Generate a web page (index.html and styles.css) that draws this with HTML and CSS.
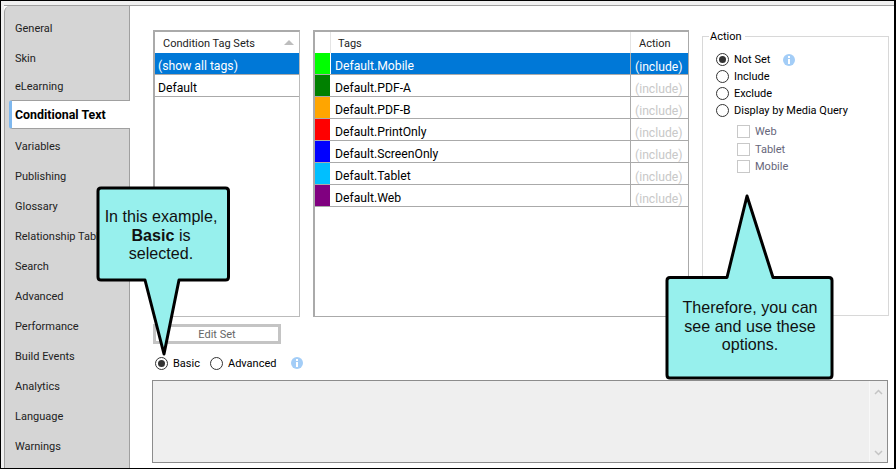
FILE: index.html
```html
<!DOCTYPE html>
<html lang="en">
<head>
    <meta charset="UTF-8">
    <title>Conditional Text</title>
    <link rel="stylesheet" href="styles.css">
</head>
<body>
    <div class="shot">
        <div class="window">
            <nav class="side">
                <a class="side-item">General</a>
                <a class="side-item">Skin</a>
                <a class="side-item short">eLearning</a>
                <a class="side-item active">Conditional Text</a>
                <a class="side-item">Variables</a>
                <a class="side-item">Publishing</a>
                <a class="side-item">Glossary</a>
                <a class="side-item">Relationship Table</a>
                <a class="side-item">Search</a>
                <a class="side-item">Advanced</a>
                <a class="side-item">Performance</a>
                <a class="side-item">Build Events</a>
                <a class="side-item">Analytics</a>
                <a class="side-item">Language</a>
                <a class="side-item">Warnings</a>
            </nav>

            <main class="main">
                <div class="panels">
                    <div class="col-left">
                        <div class="list">
                            <div class="list-head">Condition Tag Sets <span class="sort-up"></span></div>
                            <div class="list-row selected">(show all tags)</div>
                            <div class="list-row">Default</div>
                        </div>
                        <div class="edit-btn">Edit Set</div>
                    </div>

                    <div class="tags">
                        <div class="tag-head">
                            <div class="swatch-cell"></div>
                            <div class="tag-name">Tags</div>
                            <div class="tag-action">Action</div>
                        </div>
                        <div class="tag-row selected">
                            <div class="swatch" style="background: #00ff00"></div>
                            <div class="tag-name">Default.Mobile</div>
                            <div class="tag-action">(include)</div>
                        </div>
                        <div class="tag-row">
                            <div class="swatch" style="background: #008000"></div>
                            <div class="tag-name">Default.PDF-A</div>
                            <div class="tag-action">(include)</div>
                        </div>
                        <div class="tag-row">
                            <div class="swatch" style="background: #ffa500"></div>
                            <div class="tag-name">Default.PDF-B</div>
                            <div class="tag-action">(include)</div>
                        </div>
                        <div class="tag-row">
                            <div class="swatch" style="background: #ff0000"></div>
                            <div class="tag-name">Default.PrintOnly</div>
                            <div class="tag-action">(include)</div>
                        </div>
                        <div class="tag-row">
                            <div class="swatch" style="background: #0000ff"></div>
                            <div class="tag-name">Default.ScreenOnly</div>
                            <div class="tag-action">(include)</div>
                        </div>
                        <div class="tag-row">
                            <div class="swatch" style="background: #00bfff"></div>
                            <div class="tag-name">Default.Tablet</div>
                            <div class="tag-action">(include)</div>
                        </div>
                        <div class="tag-row">
                            <div class="swatch" style="background: #800080"></div>
                            <div class="tag-name">Default.Web</div>
                            <div class="tag-action">(include)</div>
                        </div>
                    </div>

                    <fieldset class="action">
                        <legend>Action</legend>
                        <div class="opt"><span class="radio on"></span>Not Set
                            <svg class="info info-top" viewBox="0 0 12 12"><circle cx="6" cy="6" r="6" fill="#a3cdf7"/><rect x="5" y="5" width="2" height="5" fill="#fff"/><rect x="5" y="2" width="2" height="2" fill="#fff"/></svg>
                        </div>
                        <div class="opt"><span class="radio"></span>Include</div>
                        <div class="opt"><span class="radio"></span>Exclude</div>
                        <div class="opt"><span class="radio"></span>Display by Media Query</div>
                        <div class="checks">
                            <div class="check-row"><span class="check"></span>Web</div>
                            <div class="check-row"><span class="check"></span>Tablet</div>
                            <div class="check-row"><span class="check"></span>Mobile</div>
                        </div>
                    </fieldset>
                </div>

                <div class="mode">
                    <span class="radio on"></span><span class="mode-label">Basic</span>
                    <span class="radio"></span><span class="mode-label">Advanced</span>
                    <svg class="info" viewBox="0 0 12 12"><circle cx="6" cy="6" r="6" fill="#a3cdf7"/><rect x="5" y="5" width="2" height="5" fill="#fff"/><rect x="5" y="2" width="2" height="2" fill="#fff"/></svg>
                </div>

                <div class="preview">
                    <div class="scroll">
                        <svg viewBox="0 0 9 6"><path d="M1 5 L4.5 1.5 L8 5" fill="none" stroke="#c4c4c4" stroke-width="1.5"/></svg>
                        <svg viewBox="0 0 9 6"><path d="M1 1 L4.5 4.5 L8 1" fill="none" stroke="#c4c4c4" stroke-width="1.5"/></svg>
                    </div>
                </div>
            </main>
        </div>

        <!-- callouts sit over the dialog -->
        <div class="callout callout-a">
            <svg viewBox="0 0 136 174" width="136" height="174"><path d="M5 3 H129.5 Q132.5 3 132.5 6 V92 Q132.5 95 129.5 95 H83 L68 169 L49 95 H5 Q2 95 2 92 V6 Q2 3 5 3 Z" fill="#97f0ed" stroke="#000" stroke-width="3" stroke-linejoin="round"/></svg>
            <p>In this example, <b>Basic</b> is selected.</p>
        </div>
        <div class="callout callout-b">
            <svg viewBox="0 0 172 190" width="172" height="190"><path d="M5 86.5 H62 L82 5 L108 86.5 H164 Q167 86.5 167 89.5 V184 Q167 187 164 187 H5 Q2 187 2 184 V89.5 Q2 86.5 5 86.5 Z" fill="#97f0ed" stroke="#000" stroke-width="3" stroke-linejoin="round"/></svg>
            <p>Therefore, you can see and use these options.</p>
        </div>
    </div>
</body>
</html>
```

FILE: styles.css
```css
* {
    box-sizing: border-box;
}

body {
    margin: 0;
    background: #fff;
    color: #000;
    font-family: Roboto, "Open Sans", sans-serif;
    font-size: 11px;
}

.shot {
    position: relative;
    width: 896px;
    height: 469px;
    padding: 4px 0 0 3px;
    overflow: hidden;
    background: #f0f0f0;
    border-top: 1px solid #000;
    border-left: 1px solid #000;
    border-right: 2px solid #000;
    border-bottom: 1px solid #000;
}

.window {
    display: flex;
    height: 100%;
    background: #fff;
    border-top: 1px solid #a0a0a0;
}

/* left tabs */
.side {
    flex: none;
    width: 126px;
    padding-top: 7px;
    background: #d5d5d5;
    border-right: 1px solid #a0a0a0;
    border-left: 1px solid #a0a0a0;
    border-top-left-radius: 6px;
}

.side-item {
    display: flex;
    align-items: center;
    height: 30px;
    padding-left: 10px;
    white-space: nowrap;
    color: #222;
}

.side-item.short {
    height: 27px;
}

.side-item.active {
    height: 29px;
    margin: 0 -1px 2px 4px;
    padding-left: 3px;
    background: #fff;
    border-top: 1px solid #a0a0a0;
    border-bottom: 1px solid #a0a0a0;
    border-left: 3px solid #7eb8ef;
    border-radius: 3px 0 0 3px;
    font-size: 12.4px;
    font-weight: 700;
    color: #000;
}

/* right side */
.main {
    flex: 1;
    min-width: 0;
    padding: 24px 6px 5px 22px;
}

.panels {
    display: flex;
    height: 314px;
}

.col-left {
    flex: none;
    width: 147px;
    margin-left: 1px;
}

.list {
    height: 287px;
    border: 2px solid #aaa;
    border-bottom-width: 1px;
    border-right-width: 1px;
    border-bottom-color: #bbb;
    border-right-color: #bbb;
}

.list-head {
    position: relative;
    height: 21px;
    line-height: 23px;
    padding-left: 8px;
    color: #222;
}

.sort-up {
    position: absolute;
    top: 8px;
    right: 5px;
    border-left: 5px solid transparent;
    border-right: 5px solid transparent;
    border-bottom: 5px solid #bdbdbd;
}

.list-row {
    height: 22px;
    padding: 2px 0 0 3px;
    line-height: 23px;
    font-size: 12.2px;
    border-bottom: 1px solid #aaa;
}

.list-row.selected {
    background: #0078d7;
    color: #fff;
}

.edit-btn {
    width: 128px;
    height: 20px;
    margin-top: 7px;
    line-height: 16px;
    text-align: center;
    color: #666;
    border: 3px solid #c4c4c4;
}

.tags {
    flex: none;
    width: 376px;
    height: 287px;
    margin-left: 13px;
    border: 1px solid #aaa;
    border-top-width: 2px;
    border-left-width: 2px;
}

.tag-head,
.tag-row {
    display: flex;
    height: 22px;
    font-size: 12.2px;
    border-bottom: 1px solid #aaa;
}

.tag-head {
    height: 21px;
    border-bottom: 0;
    font-size: 11px;
    color: #222;
}

.swatch-cell {
    flex: none;
    width: 16px;
    border-right: 1px solid #e4e4e4;
}

.swatch {
    flex: none;
    width: 15px;
    margin-right: 1px;
}

.tag-head .tag-name {
    padding: 0 0 0 7px;
}

.tag-name {
    flex: 1;
    padding: 2px 0 0 4px;
    line-height: 23px;
}

.tag-action {
    flex: none;
    width: 58px;
    padding: 2px 0 0 4px;
    line-height: 24px;
    border-left: 1px solid #aaa;
    color: #c8c8c8;
}

.tag-head .tag-name,
.tag-head .tag-action {
    line-height: 23px;
}

.tag-head .tag-action {
    padding: 0 0 0 8px;
    color: #222;
    border-left-color: #e4e4e4;
}

.tag-row.selected {
    color: #fff;
}

.tag-row.selected .tag-name,
.tag-row.selected .tag-action {
    background: #0078d7;
    color: #fff;
}

.action {
    flex: none;
    width: 187px;
    height: 286px;
    margin: 0 0 0 13px;
    padding: 8px 0 0 13px;
    border: 1px solid #d8d8d8;
}

.action legend {
    padding: 0 3px 0 1px;
    margin-left: -7px;
    line-height: 13px;
}

.opt {
    display: flex;
    align-items: center;
    height: 17px;
}

.radio {
    flex: none;
    position: relative;
    display: inline-block;
    width: 13px;
    height: 13px;
    margin-right: 5px;
    border: 1px solid #333;
    border-radius: 50%;
    background: #fff;
}

.radio.on::after {
    content: "";
    position: absolute;
    top: 2px;
    left: 2px;
    width: 7px;
    height: 7px;
    border-radius: 50%;
    background: #333;
}

.info {
    flex: none;
    width: 12px;
    height: 12px;
}

.info-top {
    margin-left: 13px;
}

.checks {
    padding: 4px 0 0 21px;
    color: #66667a;
}

.check-row {
    display: flex;
    align-items: center;
    height: 17.5px;
}

.check {
    flex: none;
    width: 13px;
    height: 13px;
    margin-right: 5px;
    border: 1px solid #c8c8c8;
}

.mode {
    display: flex;
    align-items: center;
    height: 18px;
    margin-top: 10px;
    padding-left: 3px;
}

.mode-label {
    margin-right: 10px;
}

.mode-label + .radio + .mode-label {
    margin-right: 15px;
}

.preview {
    display: flex;
    justify-content: flex-end;
    height: 83px;
    margin-top: 8px;
    background: #efefef;
    border: 1px solid #8c8c8c;
}

.scroll {
    display: flex;
    flex-direction: column;
    justify-content: space-between;
    align-items: center;
    width: 18px;
    padding: 8px 0 6px;
    border-left: 1px solid #f8f8f8;
}

.scroll svg {
    width: 9px;
    height: 6px;
}

/* callouts */
.callout {
    position: absolute;
}

.callout svg {
    display: block;
}

.callout p {
    position: absolute;
    margin: 0;
    font-family: "Liberation Sans", Arial, sans-serif;
    font-size: 16.1px;
    line-height: 18.5px;
    text-align: center;
    color: #111;
}

.callout-a {
    left: 95px;
    top: 184px;
}

.callout-a p {
    left: 3px;
    top: 22px;
    width: 124px;
}

.callout-b {
    left: 664px;
    top: 190px;
}

.callout-b p {
    left: 8px;
    top: 107px;
    width: 154px;
}
```
